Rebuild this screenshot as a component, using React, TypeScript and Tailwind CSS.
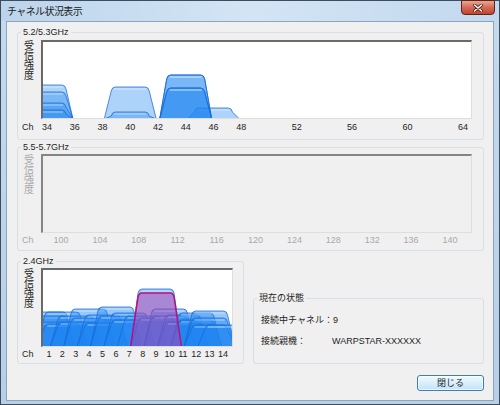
import React from 'react'

type Net = { ch: number; top: number; kind?: 'blue' | 'pink' }

function trap(cx: number, hb: number, ht: number, top: number, bottom: number) {
  const r = 4
  return `M${cx - hb} ${bottom} L${cx - ht} ${top + r} Q${cx - ht + 0.8} ${top} ${cx - ht + r} ${top} L${cx + ht - r} ${top} Q${cx + ht - 0.8} ${top} ${cx + ht} ${top + r} L${cx + hb} ${bottom} Z`
}

// x of a channel, measured from the chart's outer left edge
const x5a = (ch: number) => 6 + (ch - 34) * 13.87
const x5b = (ch: number) => 20 + (ch - 100) * 9.725
const x24 = (ch: number) => 8 + (ch - 1) * 13.38

const nets5a: Net[] = [
  { ch: 34, top: 43 },
  { ch: 34, top: 50 },
  { ch: 34, top: 61 },
  { ch: 34, top: 68 },
  { ch: 40, top: 45 },
  { ch: 40, top: 70 },
  { ch: 46, top: 66 },
  { ch: 44, top: 33 },
  { ch: 44, top: 33 },
  { ch: 44, top: 46 },
  { ch: 44, top: 46 },
]

const nets24: Net[] = [
  { ch: 1, top: 42 },
  { ch: 1, top: 46 },
  { ch: 1, top: 52 },
  { ch: 2, top: 42 },
  { ch: 2, top: 54 },
  { ch: 3, top: 46 },
  { ch: 3, top: 52 },
  { ch: 4, top: 39 },
  { ch: 4, top: 48 },
  { ch: 5, top: 45 },
  { ch: 5, top: 53 },
  { ch: 6, top: 37 },
  { ch: 6, top: 46 },
  { ch: 7, top: 43 },
  { ch: 7, top: 50 },
  { ch: 8, top: 46 },
  { ch: 9, top: 19 },
  { ch: 9, top: 48 },
  { ch: 10, top: 39 },
  { ch: 10, top: 46 },
  { ch: 11, top: 45 },
  { ch: 11, top: 52 },
  { ch: 12, top: 43 },
  { ch: 12, top: 50 },
  { ch: 13, top: 41 },
  { ch: 13, top: 48 },
  { ch: 13, top: 55 },
  { ch: 14, top: 55 },
  { ch: 9, top: 23, kind: 'pink' },
]

function Chart({ w, h, nets, xOf, hb, ht, alpha, disabled }: {
  w: number; h: number; nets: Net[]; xOf: (ch: number) => number; hb: number; ht: number; alpha: number; disabled?: boolean
}) {
  const iw = w - 3
  const ih = h - 3
  return (
    <div
      className={`border-t-2 border-l-2 border-r border-b ${disabled ? 'bg-[#f0f0f0] border-t-[#858585] border-l-[#858585]' : 'bg-white border-t-[#6a6a6a] border-l-[#6a6a6a]'} border-r-[#dedede] border-b-[#dedede]`}
      style={{ width: w, height: h }}
    >
      <svg width={iw} height={ih} className="block overflow-hidden">
        {nets.map((n, i) => {
          const cx = xOf(n.ch) - 2
          if (n.kind === 'pink') {
            return (
              <path key={i} d={trap(cx, hb, ht, n.top, ih + 1)} fill="#c03aa8" fillOpacity={0.45} stroke="#b8127e" strokeWidth={1.5} />
            )
          }
          return (
            <g key={i}>
              <path d={trap(cx, hb, ht, n.top, ih + 1)} fill="#1f84f2" fillOpacity={alpha} stroke="#1769d6" strokeOpacity={0.75} strokeWidth={1} />
              <line x1={cx - ht + 3} x2={cx + ht - 3} y1={n.top + 2} y2={n.top + 2} stroke="#ffffff" strokeOpacity={0.35} strokeWidth={1.5} />
            </g>
          )
        })}
      </svg>
    </div>
  )
}

function YLabel({ disabled }: { disabled?: boolean }) {
  return (
    <div className={`w-[17px] mt-[1px] flex flex-col text-[10px] leading-[10px] ${disabled ? 'text-[#a8a8a8]' : 'text-[#1e1e1e]'}`}>
      {'受信強度'.split('').map((c) => (
        <span key={c}>{c}</span>
      ))}
    </div>
  )
}

function Axis({ labels, xOf, h, disabled }: { labels: number[]; xOf: (ch: number) => number; h: number; disabled?: boolean }) {
  return (
    <div className={`relative flex items-center text-[9px] ${disabled ? 'text-[#a8a8a8]' : 'text-[#1e1e1e]'}`} style={{ height: h }}>
      <span className="-ml-[2px]">Ch</span>
      {labels.map((l) => (
        <span key={l} className="absolute -translate-x-1/2" style={{ left: 17 + xOf(l) }}>
          {l}
        </span>
      ))}
    </div>
  )
}

function Group({ title, className, children }: { title: string; className: string; children: React.ReactNode }) {
  return (
    <div className={`relative border border-[#d5dfe5] rounded-[3px] ${className}`}>
      <span className="absolute left-[3px] -top-[7px] px-[2px] bg-[#f0f0f0] text-[9px] leading-[12px] text-[#1e1e1e]">{title}</span>
      {children}
    </div>
  )
}

export default function App() {
  return (
    <div className="w-[500px] h-[405px] flex flex-col border border-[#3e4d5e] bg-gradient-to-b from-[#c4daef] to-[#b7cfe7] font-['Liberation_Sans','Noto_Sans_CJK_JP',sans-serif] select-none">
      <div className="relative h-[20px] shrink-0 flex items-center pl-[6px] bg-gradient-to-r from-[#bcd4eb] via-[#d3e5f5] to-[#c2d8ee]">
        <span className="text-[10px] tracking-[-0.6px] text-[#1a1a1a]">チャネル状況表示</span>
        <div className="absolute top-[-1px] right-[4px] w-[34px] h-[15px] rounded-b-[4px] border border-[#5e2519] bg-gradient-to-b from-[#e9a596] via-[#d46a55] to-[#c2422b] flex items-center justify-center">
          <svg width="10" height="8" viewBox="0 0 10 8">
            <path d="M1.5 1 L8.5 7 M8.5 1 L1.5 7" stroke="#4a1a10" strokeWidth="3" strokeLinecap="round" />
            <path d="M1.5 1 L8.5 7 M8.5 1 L1.5 7" stroke="#ffffff" strokeWidth="1.6" strokeLinecap="round" />
          </svg>
        </div>
      </div>

      <div className="flex-1 ml-[5px] mr-[5px] mb-[3px] border border-[#8ea4bb] bg-[#f0f0f0] flex flex-col pt-[10px] pl-[10px] pr-[9px]">
        <Group title="5.2/5.3GHz" className="h-[108px] pl-[6px] pt-[7px]">
          <div className="flex">
            <YLabel />
            <Chart w={431} h={79} nets={nets5a} xOf={x5a} hb={26} ht={19} alpha={0.36} />
          </div>
          <Axis labels={[34, 36, 38, 40, 42, 44, 46, 48, 52, 56, 60, 64]} xOf={x5a} h={18} />
        </Group>

        <Group title="5.5-5.7GHz" className="mt-[7px] h-[104px] pl-[6px] pt-[6px]">
          <div className="flex">
            <YLabel disabled />
            <Chart w={431} h={79} nets={[]} xOf={x5b} hb={26} ht={19} alpha={0.36} disabled />
          </div>
          <Axis labels={[100, 104, 108, 112, 116, 120, 124, 128, 132, 136, 140]} xOf={x5b} h={16} disabled />
        </Group>

        <div className="mt-[10px] flex items-end gap-[9px]">
          <Group title="2.4GHz" className="w-[227px] h-[103px] pl-[6px] pt-[6px]">
            <div className="flex">
              <YLabel />
              <Chart w={192} h={79} nets={nets24} xOf={x24} hb={25.5} ht={18} alpha={0.46} />
            </div>
            <Axis labels={[1, 2, 3, 4, 5, 6, 7, 8, 9, 10, 11, 12, 13, 14]} xOf={x24} h={16} />
          </Group>

          <Group title="現在の状態" className="flex-1 h-[66px] pl-[7px] pt-[15px]">
            <div className="flex flex-col gap-[9px] text-[9px] leading-[12px] text-[#1e1e1e]">
              <div>接続中チャネル：9</div>
              <div className="flex">
                <span className="w-[71px]">接続親機：</span>
                <span>WARPSTAR-XXXXXX</span>
              </div>
            </div>
          </Group>
        </div>

        <div className="mt-[11px] flex justify-end">
          <button className="w-[67px] h-[16px] rounded-[3px] border border-[#3c7fb1] bg-gradient-to-b from-[#f1f9fe] via-[#d9effc] to-[#bfe3f9] text-[9px] leading-[12px] text-[#1e1e1e] shadow-[inset_0_0_0_1px_rgba(255,255,255,0.7)]">
            閉じる
          </button>
        </div>
      </div>
    </div>
  )
}
